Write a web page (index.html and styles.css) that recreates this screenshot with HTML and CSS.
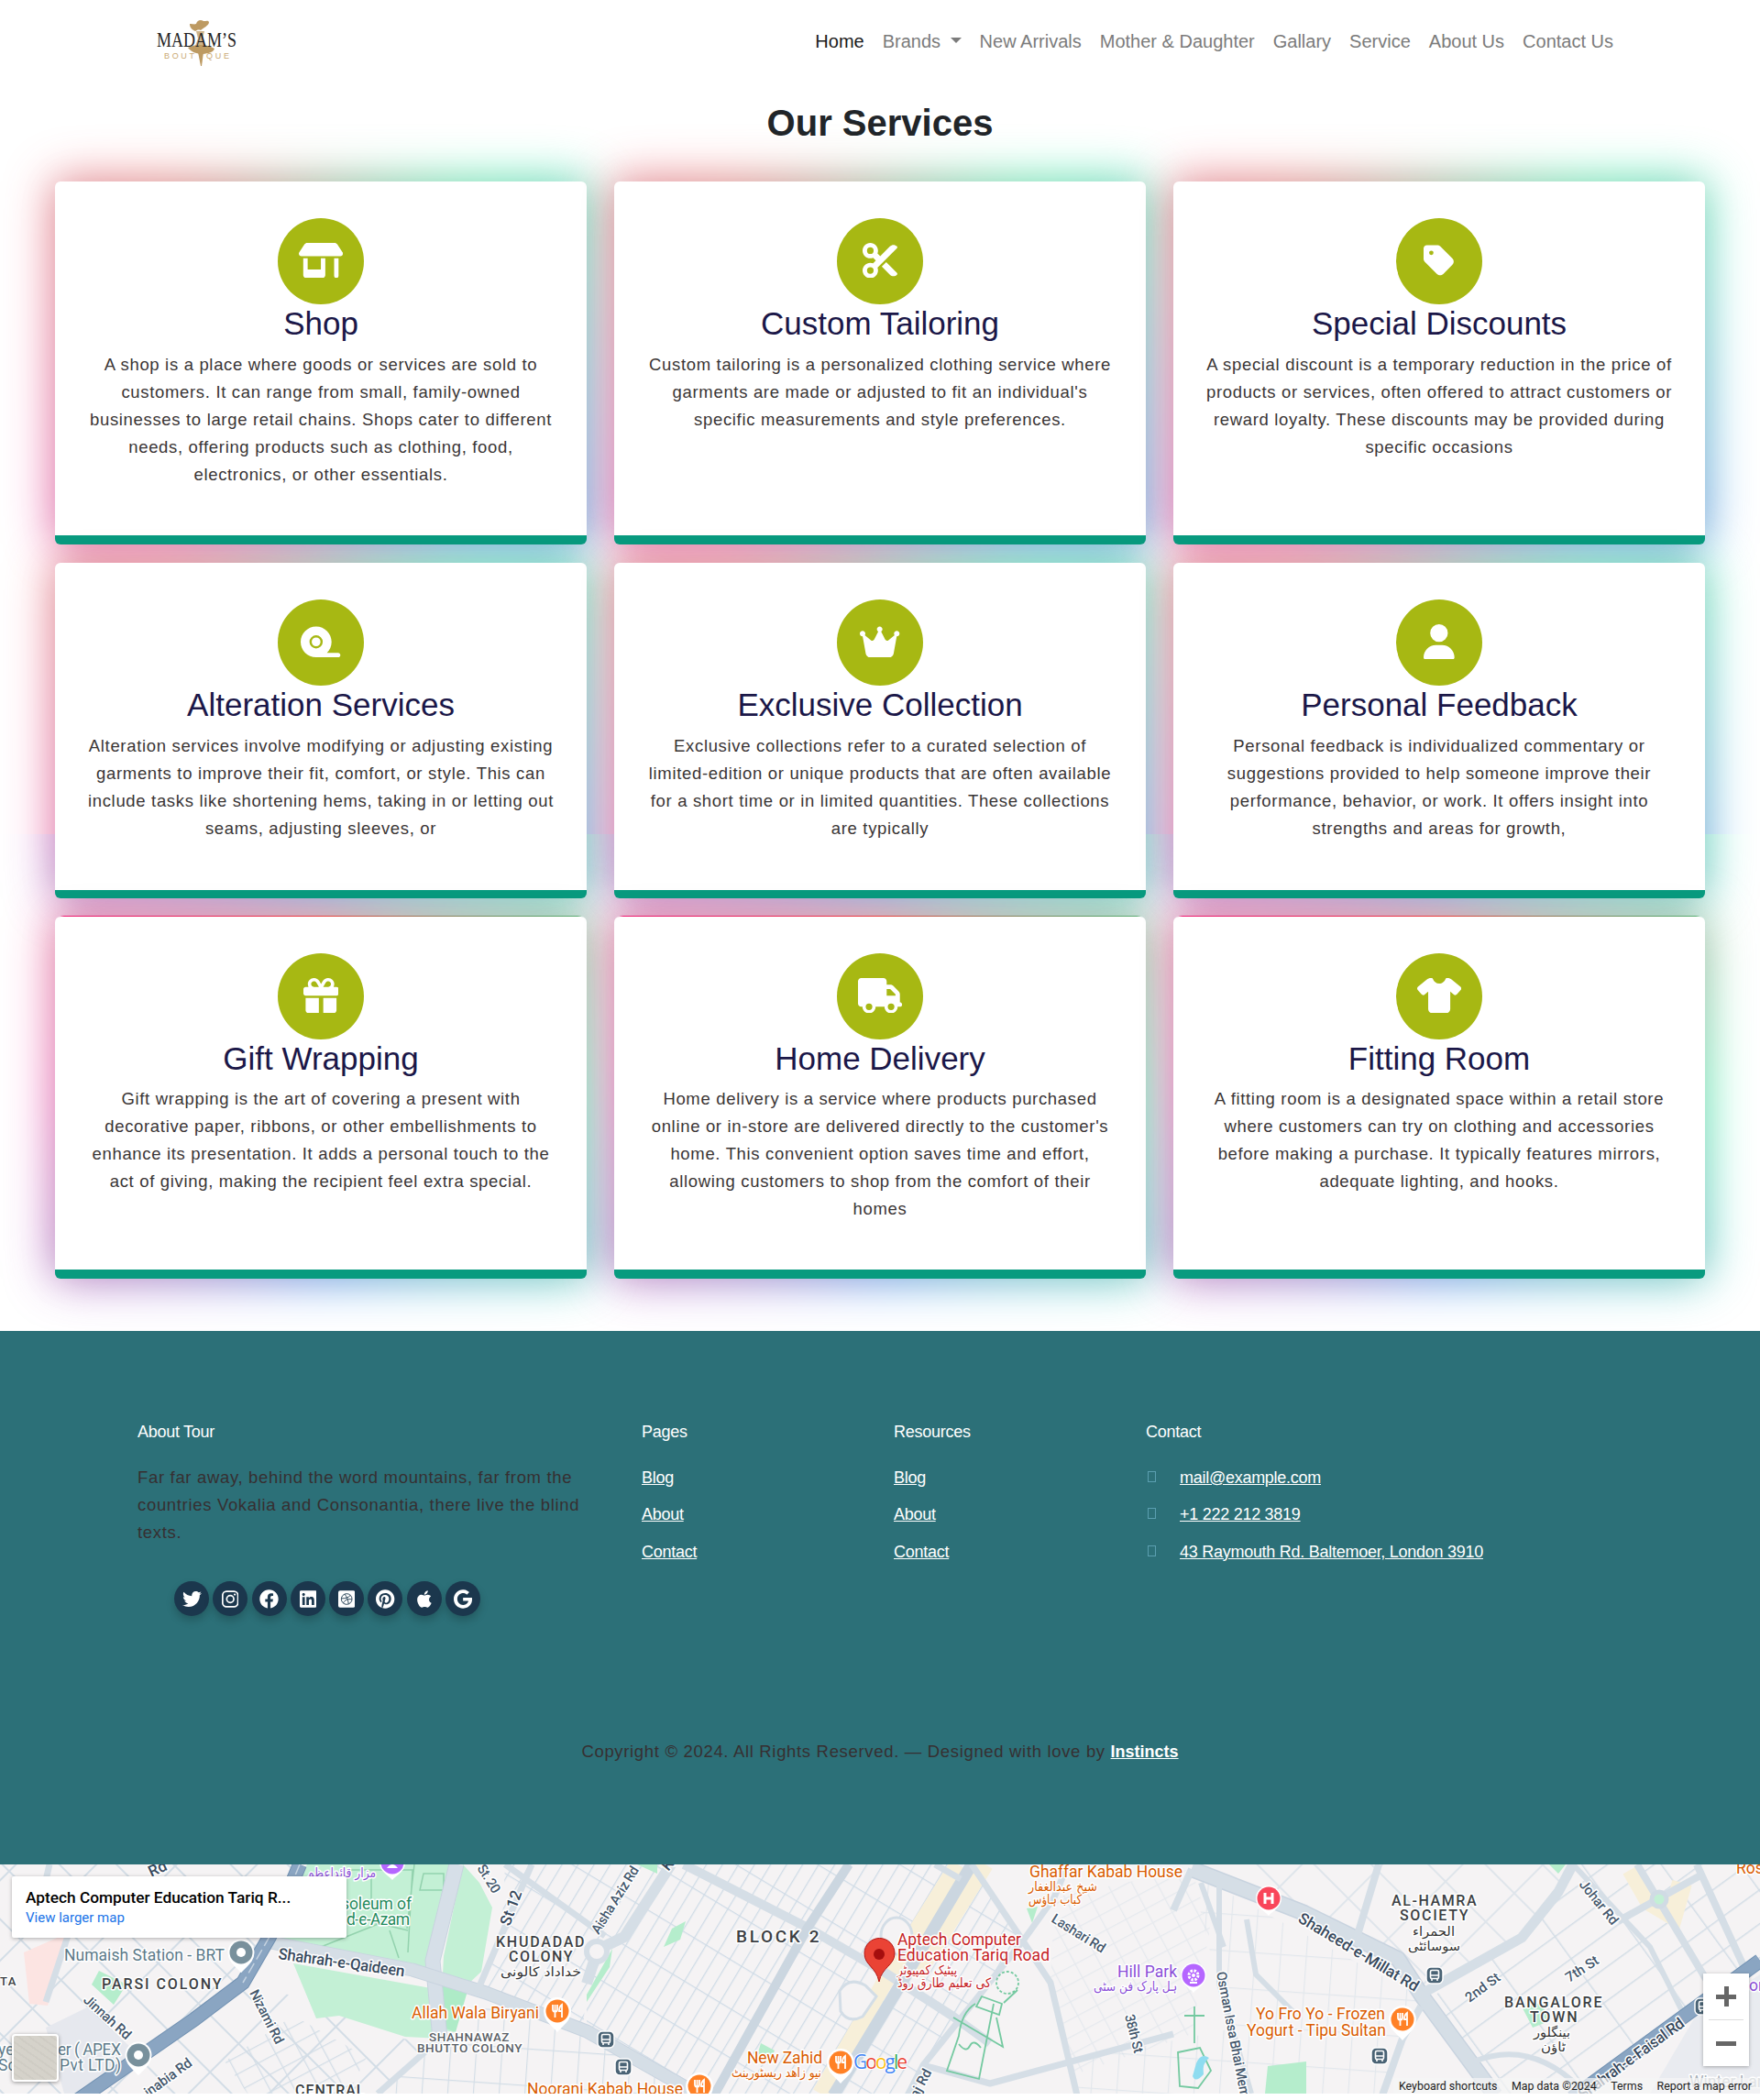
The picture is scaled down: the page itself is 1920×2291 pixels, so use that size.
FILE: index.html
```html
<!DOCTYPE html>
<html lang="en">
<head>
<meta charset="utf-8">
<title>Our Services</title>
<link rel="stylesheet" href="styles.css">
</head>
<body>
<header class="navbar">
  <svg class="logo" viewBox="0 0 100 56" role="img" aria-label="Madam's Boutique">
    <g fill="#bd9a62">
      <path d="M37 9c3 0 5 1 7 0 1-4 5-5 8-3 3 0 5-1 6 1 0 4-6 6-9 9-3-1-4 0-6 1-4-2-6-4-6-8z"/>
      <path d="M44 17h9l-2 8 3 8H43l3-8z" opacity=".75"/>
      <path d="M35 35c7-4 21-4 29 1-2 5-7 5-13 6-6 0-12-2-16-7z"/>
      <path d="M46 40h6l-2 15h-1z"/>
    </g>
    <g class="logo-name">
      <text x="1" y="34" textLength="87" lengthAdjust="spacingAndGlyphs">MADAM’S</text>
    </g>
    <text class="logo-sub" x="9" y="47" textLength="33">BOUT</text>
    <text class="logo-sub" x="55" y="47" textLength="25">QUE</text>
  </svg>
  <nav class="menu">
    <a class="active">Home</a><a>Brands <i class="caret"></i></a><a>New Arrivals</a><a>Mother &amp; Daughter</a><a>Gallary</a><a>Service</a><a>About Us</a><a>Contact Us</a>
  </nav>
</header>
<main class="services">
  <h1>Our Services</h1>
  <div class="grid">
    <article class="card"><span class="icon"><svg viewBox="0 0 640 512"><path d="M36.8 192H603.2c20.3 0 36.8-16.5 36.8-36.8c0-7.3-2.2-14.4-6.2-20.4L558.2 21.4C549.3 8 534.4 0 518.3 0H121.7c-16 0-31 8-39.9 21.4L6.2 134.7c-4 6.1-6.2 13.2-6.2 20.4C0 175.5 16.5 192 36.8 192zM64 224V384v80c0 26.5 21.5 48 48 48H336c26.5 0 48-21.5 48-48V384 224H320V384H128V224H64zm448 0V480c0 17.7 14.3 32 32 32s32-14.3 32-32V224H512z"/></svg></span><h3>Shop</h3><p>A shop is a place where goods or services are sold to customers. It can range from small, family-owned businesses to large retail chains. Shops cater to different needs, offering products such as clothing, food, electronics, or other essentials.</p></article>
    <article class="card"><span class="icon"><svg viewBox="0 0 512 512"><path d="M256 192l-39.5-39.5c4.9-12.6 7.5-26.2 7.5-40.5C224 50.1 173.9 0 112 0S0 50.1 0 112s50.1 112 112 112c14.3 0 27.9-2.7 40.5-7.5L192 256l-39.5 39.5c-12.6-4.9-26.2-7.5-40.5-7.5C50.1 288 0 338.1 0 400s50.1 112 112 112s112-50.1 112-112c0-14.3-2.7-27.9-7.5-40.5L499.2 76.8c7.1-7.1 7.1-18.5 0-25.6c-28.3-28.3-74.1-28.3-102.4 0L256 192zm22.6 150.6L396.8 460.8c28.3 28.3 74.1 28.3 102.4 0c7.1-7.1 7.1-18.5 0-25.6L342.6 278.6l-64 64zM64 112a48 48 0 1 1 96 0 48 48 0 1 1 -96 0zm48 240a48 48 0 1 1 0 96 48 48 0 1 1 0-96z"/></svg></span><h3>Custom Tailoring</h3><p>Custom tailoring is a personalized clothing service where garments are made or adjusted to fit an individual's specific measurements and style preferences.</p></article>
    <article class="card"><span class="icon"><svg viewBox="0 0 448 512"><path d="M0 80V229.5c0 17 6.7 33.3 18.7 45.3l176 176c25 25 65.5 25 90.5 0L418.7 317.3c25-25 25-65.5 0-90.5l-176-176c-12-12-28.3-18.7-45.3-18.7H48C21.5 32 0 53.5 0 80zm112 32a32 32 0 1 1 0 64 32 32 0 1 1 0-64z"/></svg></span><h3>Special Discounts</h3><p>A special discount is a temporary reduction in the price of products or services, often offered to attract customers or reward loyalty. These discounts may be provided during specific occasions</p></article>

    <article class="card split"><span class="icon"><svg viewBox="0 0 576 512"><path d="M380.8 416c41.5-40.7 67.2-97.3 67.2-160C448 132.3 347.7 32 224 32S0 132.3 0 256S100.3 480 224 480H544c17.7 0 32-14.3 32-32s-14.3-32-32-32H380.8zM224 160a96 96 0 1 1 0 192 96 96 0 1 1 0-192zm64 96a64 64 0 1 0 -128 0 64 64 0 1 0 128 0z"/></svg></span><h3>Alteration Services</h3><p>Alteration services involve modifying or adjusting existing garments to improve their fit, comfort, or style. This can include tasks like shortening hems, taking in or letting out seams, adjusting sleeves, or</p></article>
    <article class="card split"><span class="icon"><svg viewBox="0 0 576 512"><path d="M309 106c11.4-7 19-19.7 19-34c0-22.1-17.9-40-40-40s-40 17.9-40 40c0 14.4 7.6 27 19 34L209.7 220.6c-9.1 18.2-32.7 23.4-48.6 10.7L72 160c5-6.7 8-15 8-24c0-22.1-17.9-40-40-40S0 113.9 0 136s17.9 40 40 40c.2 0 .5 0 .7 0L86.4 427.4c5.5 30.4 32 52.6 63 52.6H426.6c30.9 0 57.4-22.1 63-52.6L535.3 176c.2 0 .5 0 .7 0c22.1 0 40-17.9 40-40s-17.9-40-40-40s-40 17.9-40 40c0 9 3 17.3 8 24l-89.1 71.3c-15.9 12.7-39.5 7.5-48.6-10.7L309 106z"/></svg></span><h3>Exclusive Collection</h3><p>Exclusive collections refer to a curated selection of limited-edition or unique products that are often available for a short time or in limited quantities. These collections are typically</p></article>
    <article class="card split"><span class="icon"><svg viewBox="0 0 448 512"><path d="M224 256A128 128 0 1 0 224 0a128 128 0 1 0 0 256zm-45.7 48C79.8 304 0 383.8 0 482.3C0 498.7 13.3 512 29.7 512H418.3c16.4 0 29.7-13.3 29.7-29.7C448 383.8 368.2 304 269.7 304H178.3z"/></svg></span><h3>Personal Feedback</h3><p>Personal feedback is individualized commentary or suggestions provided to help someone improve their performance, behavior, or work. It offers insight into strengths and areas for growth,</p></article>

    <article class="card late"><span class="icon"><svg viewBox="0 0 512 512"><path d="M190.5 68.8L225.3 128H224 152c-22.1 0-40-17.9-40-40s17.9-40 40-40h2.2c14.9 0 28.8 7.9 36.3 20.8zM64 88c0 14.4 3.5 28 9.6 40H32c-17.7 0-32 14.3-32 32v64c0 17.7 14.3 32 32 32H480c17.7 0 32-14.3 32-32V160c0-17.7-14.3-32-32-32H438.4c6.1-12 9.6-25.6 9.6-40c0-48.6-39.4-88-88-88h-2.2c-31.9 0-61.5 16.9-77.7 44.4L256 85.5l-24.1-41C215.7 16.9 186.1 0 154.2 0H152C103.4 0 64 39.4 64 88zm336 0c0 22.1-17.9 40-40 40H288h-1.3l34.8-59.2C329.1 55.9 342.9 48 357.8 48H360c22.1 0 40 17.9 40 40zM32 288V464c0 26.5 21.5 48 48 48H224V288H32zM288 512H432c26.5 0 48-21.5 48-48V288H288V512z"/></svg></span><h3>Gift Wrapping</h3><p>Gift wrapping is the art of covering a present with decorative paper, ribbons, or other embellishments to enhance its presentation. It adds a personal touch to the act of giving, making the recipient feel extra special.</p></article>
    <article class="card late"><span class="icon"><svg viewBox="0 0 640 512"><path d="M48 0C21.5 0 0 21.5 0 48V368c0 26.5 21.5 48 48 48H64c0 53 43 96 96 96s96-43 96-96H384c0 53 43 96 96 96s96-43 96-96h32c17.7 0 32-14.3 32-32s-14.3-32-32-32V288 256 237.3c0-17-6.7-33.3-18.7-45.3L512 114.7c-12-12-28.3-18.7-45.3-18.7H416V48c0-26.5-21.5-48-48-48H48zM416 160h50.7L544 237.3V256H416V160zM112 416a48 48 0 1 1 96 0 48 48 0 1 1 -96 0zm368-48a48 48 0 1 1 0 96 48 48 0 1 1 0-96z"/></svg></span><h3>Home Delivery</h3><p>Home delivery is a service where products purchased online or in-store are delivered directly to the customer's home. This convenient option saves time and effort, allowing customers to shop from the comfort of their homes</p></article>
    <article class="card late"><span class="icon"><svg viewBox="0 0 640 512"><path d="M211.8 0c7.8 0 14.3 5.7 16.7 13.2C240.8 51.9 277.1 80 320 80s79.2-28.1 91.5-66.8C413.9 5.7 420.4 0 428.2 0h12.6c22.5 0 44.2 7.9 61.5 22.3L628.5 127.4c6.6 5.5 10.7 13.5 11.4 22.1s-2.1 17.1-7.8 23.6l-56 64c-11.4 13.1-31.2 14.6-44.6 3.5L480 197.7V448c0 35.3-28.7 64-64 64H224c-35.3 0-64-28.7-64-64V197.7l-51.5 42.9c-13.3 11.1-33.1 9.6-44.6-3.5l-56-64c-5.7-6.5-8.5-15-7.8-23.6s4.8-16.6 11.4-22.1L137.7 22.3C155 7.9 176.7 0 199.2 0h12.6z"/></svg></span><h3>Fitting Room</h3><p>A fitting room is a designated space within a retail store where customers can try on clothing and accessories before making a purchase. It typically features mirrors, adequate lighting, and hooks.</p></article>
  </div>
</main>
<footer class="footer">
  <div class="columns">
    <section>
      <h4>About Tour</h4>
      <p>Far far away, behind the word mountains, far from the countries Vokalia and Consonantia, there live the blind texts.</p>
      <div class="social">
        <a><svg viewBox="0 0 512 512"><path d="M459.37 151.716c.325 4.548.325 9.097.325 13.645 0 138.72-105.583 298.558-298.558 298.558-59.452 0-114.68-17.219-161.137-47.106 8.447.974 16.568 1.299 25.34 1.299 49.055 0 94.213-16.568 130.274-44.832-46.132-.975-84.792-31.188-98.112-72.772 6.498.974 12.995 1.624 19.818 1.624 9.421 0 18.843-1.3 27.614-3.573-48.081-9.747-84.143-51.98-84.143-102.985v-1.299c13.969 7.797 30.214 12.67 47.431 13.319-28.264-18.843-46.781-51.005-46.781-87.391 0-19.492 5.197-37.36 14.294-52.954 51.655 63.675 129.3 105.258 216.365 109.807-1.624-7.797-2.599-15.918-2.599-24.04 0-57.828 46.782-104.934 104.934-104.934 30.213 0 57.502 12.67 76.67 33.137 23.715-4.548 46.456-13.32 66.599-25.34-7.798 24.366-24.366 44.833-46.132 57.827 21.117-2.273 41.584-8.122 60.426-16.243-14.292 20.791-32.161 39.308-52.628 54.253z"/></svg></a>
        <a><svg viewBox="0 0 448 512"><rect x="20" y="52" width="408" height="408" rx="105" fill="none" stroke="#fff" stroke-width="42"/><circle cx="224" cy="256" r="94" fill="none" stroke="#fff" stroke-width="42"/><circle cx="343" cy="137" r="27"/></svg></a>
        <a><svg viewBox="0 0 512 512"><path d="M504 256C504 119 393 8 256 8S8 119 8 256c0 123.78 90.69 226.38 209.25 245V327.69h-63V256h63v-54.64c0-62.15 37-96.48 93.67-96.48 27.14 0 55.52 4.84 55.52 4.84v61h-31.28c-30.8 0-40.41 19.12-40.41 38.73V256h68.78l-11 71.69h-57.78V501C413.31 482.38 504 379.78 504 256z"/></svg></a>
        <a><svg viewBox="0 0 448 512"><path d="M416 32H31.9C14.3 32 0 46.5 0 64.3v383.4C0 465.5 14.3 480 31.9 480H416c17.6 0 32-14.5 32-32.3V64.3c0-17.8-14.4-32.3-32-32.3zM135.4 416H69V202.2h66.5V416zm-33.2-243c-21.3 0-38.5-17.3-38.5-38.5S80.9 96 102.2 96c21.2 0 38.5 17.3 38.5 38.5 0 21.3-17.2 38.5-38.5 38.5zm282.1 243h-66.4V312c0-24.8-.5-56.7-34.5-56.7-34.6 0-39.9 27-39.9 54.9V416h-66.4V202.2h63.7v29.2h.9c8.9-16.8 30.6-34.5 62.9-34.5 67.2 0 79.7 44.3 79.7 101.9V416z"/></svg></a>
        <a><svg viewBox="0 0 448 512"><rect y="32" width="448" height="448" rx="48"/><g fill="none" stroke="#1b374d" stroke-width="22"><circle cx="224" cy="256" r="142"/><path d="M170 126c60 72 92 150 104 260M84 240c100 2 180-16 240-84M132 364c46-88 124-124 232-96"/></g></svg></a>
        <a><svg viewBox="0 0 496 512"><path d="M496 256c0 137-111 248-248 248-25.6 0-50.2-3.9-73.4-11.1 10.1-16.5 25.2-43.5 30.8-65 3-11.6 15.4-59 15.4-59 8.1 15.4 31.7 28.5 56.8 28.5 74.8 0 128.7-68.8 128.7-154.3 0-81.9-66.9-143.2-152.9-143.2-107 0-163.9 71.8-163.9 150.1 0 36.4 19.4 81.7 50.3 96.1 4.7 2.2 7.2 1.2 8.3-3.3.8-3.4 5-20.3 6.9-28.1.6-2.5.3-4.7-1.7-7.1-10.1-12.5-18.3-35.3-18.3-56.6 0-54.7 41.4-107.6 112-107.6 60.9 0 103.6 41.5 103.6 100.9 0 67.1-33.9 113.6-78 113.6-24.3 0-42.6-20.1-36.7-44.8 7-29.5 20.5-61.3 20.5-82.6 0-19-10.2-34.9-31.4-34.9-24.9 0-44.9 25.7-44.9 60.2 0 22 7.4 36.8 7.4 36.8s-24.5 103.8-29 123.2c-5 21.4-3 51.6-.9 71.2C65.4 450.9 0 361.1 0 256 0 119 111 8 248 8s248 111 248 248z"/></svg></a>
        <a><svg viewBox="0 0 384 512"><path d="M318.7 268.7c-.2-36.7 16.4-64.4 50-84.8-18.8-26.9-47.2-41.7-84.7-44.6-35.5-2.8-74.3 20.7-88.5 20.7-15 0-49.4-19.7-76.4-19.7C63.3 141.2 4 184.8 4 273.5q0 39.3 14.4 81.2c12.8 36.7 59 126.7 107.2 125.2 25.2-.6 43-17.9 75.8-17.9 31.8 0 48.3 17.9 76.4 17.9 48.6-.7 90.4-82.5 102.6-119.3-65.2-30.7-61.7-90-61.7-91.9zm-56.6-164.2c27.3-32.4 24.8-61.9 24-72.5-24.1 1.4-52 16.4-67.9 34.9-17.5 19.8-27.8 44.3-25.6 71.9 26.1 2 49.9-11.4 69.5-34.3z"/></svg></a>
        <a><svg viewBox="0 0 488 512"><path d="M488 261.8C488 403.3 391.1 504 248 504 110.8 504 0 393.2 0 256S110.8 8 248 8c66.8 0 123 24.5 166.3 64.9l-67.5 64.9C258.5 52.6 94.3 116.6 94.3 256c0 86.5 69.1 156.6 153.7 156.6 98.2 0 135-70.4 140.8-106.9H248v-85.3h236.1c2.3 12.7 3.9 24.9 3.9 41.4z"/></svg></a>
      </div>
    </section>
    <section><h4>Pages</h4><ul><li><a>Blog</a></li><li><a>About</a></li><li><a>Contact</a></li></ul></section>
    <section><h4>Resources</h4><ul><li><a>Blog</a></li><li><a>About</a></li><li><a>Contact</a></li></ul></section>
    <section><h4>Contact</h4><ul class="contact"><li><i></i><a>mail@example.com</a></li><li><i></i><a>+1 222 212 3819</a></li><li><i></i><a>43 Raymouth Rd. Baltemoer, London 3910</a></li></ul></section>
  </div>
  <p class="copyright">Copyright © 2024. All Rights Reserved. — Designed with love by <a>Instincts</a></p>
</footer>
<div class="map">
  <svg class="canvas" viewBox="0 0 1920 250">
    <defs>
      <pattern id="block" width="15" height="46" patternUnits="userSpaceOnUse" patternTransform="rotate(31)"><path d="M0 0V46M0 0H15" stroke="#cfdbe6" stroke-width="2.6" fill="none"/></pattern>
      <pattern id="wide" width="62" height="44" patternUnits="userSpaceOnUse" patternTransform="translate(10 6) rotate(45)"><path d="M0 0V44M0 0H62" stroke="#d3dde6" stroke-width="4" fill="none"/></pattern>
      <pattern id="tight" width="24" height="17" patternUnits="userSpaceOnUse" patternTransform="rotate(-28)"><path d="M0 0V17M0 0H24" stroke="#d3dde6" stroke-width="2.6" fill="none"/></pattern>
      <pattern id="east" width="70" height="30" patternUnits="userSpaceOnUse" patternTransform="translate(1660 30) rotate(-36)"><path d="M0 0V30M0 0H70" stroke="#d3dde6" stroke-width="3" fill="none"/></pattern>
      <pattern id="upright" width="28" height="40" patternUnits="userSpaceOnUse" patternTransform="rotate(4)"><path d="M0 0V40M0 0H28" stroke="#d3dde6" stroke-width="2.4" fill="none"/></pattern>
      <g id="fork"><path d="M0 20C-5 14-13 10-13 0a13 13 0 1 1 26 0C13 10 5 14 0 20z" fill="#fff" stroke="#fff" stroke-width="4"/><circle r="12.5" fill="#ff8126"/><path d="M-5-7v5q0 3 2.500 3t2.500-3v-5M-2.500-7V7M5 7V-7Q2-5 2 0h3" stroke="#fff" stroke-width="1.800" fill="none"/></g>
      <g id="stop"><path d="M0 20C-5 14-13 10-13 0a13 13 0 1 1 26 0C13 10 5 14 0 20z" fill="#fff" stroke="#fff" stroke-width="3"/><circle r="12.500" fill="#78909c"/><circle r="5" fill="#fff"/></g>
      <g id="bus"><rect x="-9" y="-9" width="18" height="18" rx="5" fill="#4a6375" stroke="#fff" stroke-width="1.500"/><rect x="-4.500" y="-5.500" width="9" height="9" rx="1.500" fill="none" stroke="#fff" stroke-width="1.600"/><path d="M-4.500 0H4.500M-3 4v2M3 4v2" stroke="#fff" stroke-width="1.600"/></g>
    </defs>
    <rect width="1920" height="250" fill="#f5f3f4"/>
    <path d="M0 0H330L262 130 90 250H0z" fill="url(#wide)"/>
    <path d="M26 96l50-22-24 80-20-2z" fill="#fce4e2"/>
    <path d="M50 178l45-22 60 55-70 39H70z" fill="#e6e8ee"/>
    <path d="M215 170L275 130 340 150 440 190 470 195 412 250H110z" fill="url(#wide)"/>
    <path d="M245 215L320 165 400 210 380 250H270z" fill="url(#tight)"/>
    <path d="M470 195l60-40 110 30 110 65H412z" fill="url(#upright)"/>
    <path d="M551 0H735L640 130 636 180 520 140 548 60z" fill="url(#block)"/>
    <path d="M746 0H1050L909 250H760L640 183V130L730 0z" fill="url(#block)"/>
    <path d="M1060 0L1115 82 1007 219 985 250H915z" fill="url(#block)"/>
    <path d="M1150 36L1300 5 1320 70 1300 185 1170 230 1146 129z" fill="url(#tight)" opacity=".45"/>
    <path d="M1300 10L1553 146 1508 250H1175L1165 215 1340 180z" fill="url(#upright)" opacity=".55"/>
    <path d="M1340 0H1716L1660 80 1553 140 1423 53z" fill="url(#wide)" opacity=".65"/>
    <path d="M1560 146L1660 80 1716 0H1920V105L1715 250H1631z" fill="url(#east)"/>
    <path d="M1850 165L1920 120V250H1800z" fill="#e9ebf0"/>
    <path d="M335 0H490L472 115 300 90 292 76zM320 108l150 27 12 55-40-2-72-23-25 3zM505 0l18 20 14 27-12 70-17 16-13 50-15-3 4-80z" fill="#c3f0d5"/>
    <path d="M480 130l30 8-13 45-15-6z" fill="#aeebc7"/>
    <path d="M108 116l30 15-14 22-24-22zM733 70l15-8-6 20-18 8zM695 0h22v10zM640 142l28-50-3 20-25 38zM830 195l15 8-6 14-14-5zM1383 220l42-5v35h-45zM1660 155l22-4 8 20-18 7zM1120 48l12-2-6 18zM1690 0h18l-8 10z" fill="#b5edcc"/>
    <g fill="none" stroke="#93d2ae" stroke-width="1.500"><path d="M380 6h70l-5 90M395 60l50 12M452 0l-8 70M462 10h22v18h-26zM330 95l90 8M350 90l70-28M425 72l10 30M405 10v40"/></g>
    <g fill="none" stroke="#f7efd9"><path d="M1045 0L970 120 895 250M1075 0L1000 120" stroke-width="18"/><path d="M1780 5L1800 40 1825 55 1835 20" stroke-width="22"/></g>
    <g fill="none" stroke="#d5dee6" stroke-linejoin="round">
      <path d="M498 0L472 105 480 190" stroke="#c8d3df" stroke-width="17"/><path d="M498 0L472 105 480 190" stroke="#d6dfe8" stroke-width="15"/>
      <path d="M290 84L450 115 530 140 640 182 760 250" stroke="#c8d3df" stroke-width="15"/><path d="M290 84L450 115 530 140 640 182 760 250" stroke-width="13"/>
      <path d="M551 0L660 78M54 0L40 60M75 75L50 150M480 190L412 250M580 0L520 140" stroke-width="7"/>
      <path d="M732 0L681 79 652 93 640 130" stroke-width="12"/><circle cx="651" cy="95" r="11" stroke-width="6" fill="#f5f3f4"/>
      <path d="M746 0L881 69 967 119 1040 166 1080 195" stroke-width="10"/>
      <path d="M926 0L881 69 779 252" stroke="#cbd6e0" stroke-width="10"/>
      <path d="M1060 0L975 143 909 252" stroke="#cbd6e0" stroke-width="13"/>
      <path d="M1060 0L1115 82 1146 129 1175 252M1165 0L1150 36 1117 82 1007 219 990 252M1007 219L1080 239 1280 185M1020 0L1048 16" stroke-width="7"/>
      <path d="M1300 5L1423 53 1525 103 1553 146 1631 252" stroke="#c8d3df" stroke-width="18"/><path d="M1300 5L1423 53 1525 103 1553 146 1631 252" stroke-width="15"/>
      <path d="M1553 140L1660 80 1700 30 1716 0" stroke-width="11"/><path d="M1508 252L1530 190 1550 155M1300 5L1280 50M1504 0L1480 80M1786 0L1864 130M1851 0L1904 115M1765 62L1855 12" stroke-width="8"/>
      <path d="M1716 0L1800 90 1835 160M1608 215Q1670 190 1725 245M1310 20L1335 90M1330 20V130L1365 250M1360 60L1370 120 1410 160" stroke-width="6"/>
    </g>
    <g fill="none"><path d="M327 0L294 79 265 129 212 169 85 257M1920 105L1715 255" stroke="#7191b2" stroke-width="16"/><path d="M327 0L294 79 265 129 212 169 85 257M1920 105L1715 255" stroke="#8aa5c2" stroke-width="14"/><path d="M327 0L294 79 265 129" stroke="#c5d3e1" stroke-width="1.500" stroke-dasharray="12 5"/></g>
    <circle cx="1810" cy="38" r="8" fill="#c3f0d5" stroke="#d0dbe4" stroke-width="5"/>
    <g fill="#f5f3f4" stroke="#d3dde6" stroke-width="3"><ellipse cx="978" cy="78" rx="17" ry="20"/><path d="M916 138q10-16 28-6l12 12-15 22q-16 8-24-6z"/></g>
    <g fill="none" stroke="#74c9a0" stroke-width="1.800"><circle cx="1099" cy="129" r="12" stroke-dasharray="3 2"/><path d="M1071 144l22 8-3 12-25-9zM1064 152q-15 9-18 35l-13 38 35 9 16-82M1040 167l54 32-7-32M1046 196q8 10 12 2t12 2M1110 137l-15 14M1292 165h22M1303 155v40M1285 205l24-5 12 25-14 19-20-2z"/></g>
    <path d="M1305 217q5-12 14-6-8 6-6 18-9 10-12 2z" fill="#8fdcf0"/>

    <g class="lbl">
      <g fill="#5c7a89"><text x="70" y="105" textLength="175">Numaish Station - BRT</text><text x="-2" y="208">ye</text><text x="63" y="208" textLength="69">er ( APEX</text><text x="-2" y="225">Sc</text><text x="65" y="225" textLength="67">Pvt LTD)</text></g>
      <g fill="#1f8a5b"><text x="372" y="49" textLength="77">soleum of</text><text x="378" y="66" textLength="69">d-e-Azam</text></g>
      <g fill="#d95c00"><text x="449" y="168" textLength="139">Allah Wala Biryani</text><text x="575" y="251" textLength="170">Noorani Kabab House</text><text x="815" y="217" textLength="82">New Zahid</text><text x="1123" y="14" textLength="167">Ghaffar Kabab House</text><text x="1370" y="169" textLength="141">Yo Fro Yo - Frozen</text><text x="1360" y="187" textLength="152">Yogurt - Tipu Sultan</text><text x="1894" y="10">Ros</text></g>
      <g fill="#c5221f"><text x="979" y="88" textLength="135">Aptech Computer</text><text x="979" y="105" textLength="166">Education Tariq Road</text></g>
      <g fill="#8a4fd8"><text x="1219" y="123" textLength="65">Hill Park</text><text x="1908" y="138">or</text></g>
      <text x="1843" y="243" fill="#aab3bb">Winter Lan</text>
      <g class="area"><text x="111" y="136" textLength="132">PARSI COLONY</text><text class="district" x="0" y="132">TA</text><text x="541" y="90" textLength="98">KHUDADAD</text><text x="555" y="106" textLength="71">COLONY</text><text x="322" y="252" textLength="77">CENTRAL</text><text class="quarter" x="803" y="85" textLength="92">BLOCK 2</text><text x="1518" y="45" textLength="94">AL-HAMRA</text><text x="1527" y="61" textLength="76">SOCIETY</text><text x="1641" y="156" textLength="108">BANGALORE</text><text x="1669" y="172" textLength="53">TOWN</text></g>
      <g class="area small"><text x="468" y="193" textLength="89">SHAHNAWAZ</text><text x="455" y="205" textLength="116">BHUTTO COLONY</text></g>
      <g class="road"><text transform="translate(90 149) rotate(42)" textLength="64">Jinnah Rd</text><text transform="translate(272 140) rotate(63)" textLength="64">Nizami Rd</text><text class="big" transform="translate(303 103) rotate(8)" textLength="139">Shahrah-e-Qaideen</text><text class="big" transform="translate(165 14) rotate(-25)">Rd</text><text transform="translate(520 4) rotate(58)" textLength="34">St. 20</text><text class="big" transform="translate(556 68) rotate(-70)">St 12</text><text transform="translate(162 254) rotate(-36)" textLength="60">inabia Rd</text><text transform="translate(653 77) rotate(-58)" textLength="84">Aisha Aziz Rd</text><text class="big" transform="translate(729 8) rotate(-50)">K</text><text transform="translate(1146 62) rotate(32)" textLength="66">Lashari Rd</text><text transform="translate(1227 165) rotate(76)" textLength="43">38th St</text><text transform="translate(1001 256) rotate(-62)">aj Rd</text><text class="big" transform="translate(1415 62) rotate(31)" textLength="150">Shaheed-e-Millat Rd</text><text transform="translate(1327 118) rotate(79)" textLength="140">Osman Issa Bhai Mem</text><text transform="translate(1603 151) rotate(-36)">2nd St</text><text transform="translate(1712 129) rotate(-33)">7th St</text><text class="big" transform="translate(1727 257) rotate(-36)" textLength="138">Shahrah-e-Faisal Rd</text><text transform="translate(1722 22) rotate(51)" textLength="58">Johar Rd</text></g>
      <g class="ur"><g fill="#8a4fd8"><text x="335" y="14" textLength="75" lengthAdjust="spacingAndGlyphs">مزار قائداعظم</text><text x="1193" y="138" textLength="91" lengthAdjust="spacingAndGlyphs">ہل پارک فن سٹی</text></g><g fill="#333"><text x="546" y="122" textLength="88" lengthAdjust="spacingAndGlyphs">خداداد کالونی</text><text x="1541" y="78" textLength="46" lengthAdjust="spacingAndGlyphs">الحمراء</text><text x="1536" y="94" textLength="57" lengthAdjust="spacingAndGlyphs">سوسائٹی</text><text x="1673" y="188" textLength="40" lengthAdjust="spacingAndGlyphs">بینگلور</text><text x="1681" y="204" textLength="27" lengthAdjust="spacingAndGlyphs">ٹاؤن</text></g><g fill="#d95c00"><text x="798" y="232" textLength="98" lengthAdjust="spacingAndGlyphs">نیو زاھد ریسٹورینٹ</text><text x="1122" y="29" textLength="75" lengthAdjust="spacingAndGlyphs">شیخ عبدالغفار</text><text x="1122" y="43" textLength="58" lengthAdjust="spacingAndGlyphs">کباب ہاؤس</text></g><g fill="#c5221f"><text x="979" y="120" textLength="65" lengthAdjust="spacingAndGlyphs">پیٹیک کمپیوٹر</text><text x="979" y="134" textLength="102" lengthAdjust="spacingAndGlyphs">کی تعلیم طارق روڈ</text></g></g>
    </g>
    <use href="#stop" x="263" y="96"/><use href="#stop" x="151" y="208"/>
    <use href="#fork" x="608" y="160"/><use href="#fork" x="763" y="242"/><use href="#fork" x="917" y="216"/><use href="#fork" x="1530" y="169"/>
    <use href="#bus" x="661" y="191"/><use href="#bus" x="680" y="221"/><use href="#bus" x="1565" y="121"/><use href="#bus" x="1505" y="209"/><use href="#bus" x="1858" y="155"/>
    <g transform="translate(428 -2)"><path d="M0 19C-5 13-14 10-14 0H14C14 10 5 13 0 19z" fill="#fff"/><circle r="12.500" fill="#b566ff"/><path d="M-6 6q6-8 12 0z" fill="#fff"/></g>
    <g transform="translate(1302 121)"><path d="M0 19C-5 13-14 10-14 0a14 14 0 1 1 28 0C14 10 5 13 0 19z" fill="#fff"/><circle r="12.500" fill="#b566ff"/><circle r="5" fill="none" stroke="#fff" stroke-width="3" stroke-dasharray="2.500 1.400"/><circle r="2" fill="#fff"/><path d="M-4 8H4" stroke="#fff" stroke-width="2"/></g>
    <g transform="translate(1384 37)"><path d="M0 19C-5 13-14 10-14 0a14 14 0 1 1 28 0C14 10 5 13 0 19z" fill="#fff"/><circle r="12.500" fill="#f9455a"/><path d="M-4-6V6M4-6V6M-4 0H4" stroke="#fff" stroke-width="3"/></g>
    <path d="M959 128c-3-16-16-18-16-31a16.500 16.500 0 1 1 33 0c0 13-14 15-17 31z" fill="#ea4335" stroke="#b31412"/><circle cx="959" cy="98" r="6" fill="#a50e0e"/>
    <text class="google" x="931" y="223" textLength="59"><tspan fill="#4285f4">G</tspan><tspan fill="#ea4335">o</tspan><tspan fill="#fbbc04">o</tspan><tspan fill="#4285f4">g</tspan><tspan fill="#34a853">l</tspan><tspan fill="#ea4335">e</tspan></text>
  </svg>
  <div class="place"><b>Aptech Computer Education Tariq R...</b><a>View larger map</a></div>
  <div class="thumb"></div>
  <div class="zoom"><i class="plus"></i><hr><i class="minus"></i></div>
  <div class="legal"><span>Keyboard shortcuts</span><span>Map data ©2024</span><span>Terms</span><span>Report a map error</span></div>
</div>
</body>
</html>
```
FILE: styles.css
```css
* { box-sizing: border-box; }
body { margin: 0; background: #fff; font-family: "Liberation Sans", Arial, sans-serif; color: #212529; overflow-x: hidden; }
h1, h3, h4, p, ul { margin: 0; padding: 0; }

.navbar { height: 90px; padding: 0 150px 0 170px; display: flex; align-items: center; justify-content: space-between; }
.logo { width: 100px; height: 56px; overflow: visible; }
.logo-name text { font: 23px "Liberation Serif", serif; fill: #222; }
.logo-sub { font: 9px "Liberation Sans", sans-serif; fill: #c9a872; }
.menu { display: flex; font-size: 20px; color: #7b7b7b; }
.menu a { padding: 0 10px; white-space: nowrap; }
.menu .active { color: #1a1a1a; }
.caret { display: inline-block; margin-left: 5px; vertical-align: 5px; border: 6px solid transparent; border-top-color: currentColor; border-bottom: 0; }

.services { position: relative; z-index: 0; height: 1362px; padding: 20px 60px 0; }
.services h1 { font-size: 40px; line-height: 48px; text-align: center; }
.grid { display: grid; grid-template-columns: repeat(3, 580px); grid-template-rows: 396px 366px 395px; gap: 20px 30px; margin-top: 40px; }
.card { --from: -45deg; position: relative; display: flex; flex-direction: column; align-items: center; padding: 40px 35px 0; background: #fff; border-bottom: 10px solid #089b7f; border-radius: 6px; box-shadow: 0 0 40px rgba(0,0,0,.14); text-align: center; }
.card.split { border-bottom-width: 9px; }
.card::before, .card.split::after {
  content: ""; position: absolute; z-index: -1; inset: -3px -3px -12px;
  border-radius: 10px; filter: blur(27px); opacity: .5;
  background: conic-gradient(from var(--from), #ff4545, #00ff99, #006aff, #ff0095, #ff4545);
}
.card.split::before { clip-path: inset(-90px -90px 73px -90px); }
.card.split::after { --from: 0deg; clip-path: inset(299px -90px -90px -90px); }
.late { --from: 0deg; }
.late::after { content: ""; position: absolute; z-index: -1; inset: -1px 0 9px; border-radius: 10px; background: conic-gradient(#ff4545, #00ff99, #006aff, #ff0095, #ff4545); }
.icon { width: 94px; height: 94px; flex: none; display: flex; align-items: center; justify-content: center; padding-bottom: 2px; border-radius: 50%; background: #a7b813; }
.icon svg { height: 38.5px; fill: #fff; }
.card h3 { font-size: 35px; font-weight: 400; line-height: 42px; color: #1b1748; white-space: nowrap; }
.card p { margin-top: 9px; font-size: 18.5px; line-height: 30px; letter-spacing: .67px; color: #3a3535; }
.card.late p { margin-top: 8px; }

.footer { position: relative; height: 582px; padding: 95px 135px 0 150px; background: #2c7078; }
.columns { display: grid; grid-template-columns: 550px 275px 275px 1fr; height: 350px; }
.footer h4 { font-size: 18px; font-weight: 400; line-height: 30px; letter-spacing: -.27px; color: #fff; }
.footer p { font-size: 18.5px; line-height: 30px; letter-spacing: .67px; color: #362f31; }
.footer .columns p { width: 500px; margin-top: 20px; }
.footer ul { list-style: none; margin-top: 20px; }
.footer li { height: 40.3px; line-height: 30px; font-size: 18px; letter-spacing: -.27px; }
.footer a { color: #fff; text-decoration: underline; }
.contact li { display: flex; }
.contact i { width: 9px; height: 12px; margin: 8px 26px 0 2px; border: 1px solid #5b9fb0; }
.social { display: flex; gap: 4.3px; margin: 38px 0 0 40px; }
.social a { width: 38px; height: 38px; display: flex; align-items: center; justify-content: center; border-radius: 50%; background: #1b374d; box-shadow: 0 5px 10px rgba(0,0,0,.2); }
.social svg { height: 21px; fill: #fff; }
.footer .copyright { margin-top: -1px; padding-right: 15px; text-align: center; }
.footer .copyright a { font-size: 18px; font-weight: 700; letter-spacing: 0; }

.map { position: relative; height: 250px; margin-bottom: 7px; overflow: hidden; font-family: Roboto, sans-serif; }
.canvas { display: block; width: 1920px; height: 250px; }
.lbl text { font-family: Roboto, sans-serif; font-size: 17.5px; paint-order: stroke; stroke: #fff; stroke-width: 3px; stroke-linejoin: round; }
.lbl .area text { font-size: 16px; font-weight: 500; fill: #3c3f43; letter-spacing: 1.5px; }
.lbl .area .district { font-size: 13px; }
.lbl .area .quarter { font-size: 19px; }
.lbl .area.small text { font-size: 13.5px; fill: #5a6066; }
.lbl .road text { font-size: 15px; font-weight: 500; fill: #43566b; }
.lbl .road .big { font-size: 17px; fill: #36485c; }
.lbl .ur text { font-family: "DejaVu Sans", sans-serif; font-size: 14px; }
.google { font: 500 21px "Open Sans", sans-serif; paint-order: stroke; stroke: #fff; stroke-width: 2px; }
.place { position: absolute; left: 13px; top: 13px; width: 365px; height: 67px; padding: 12px 15px; background: #fff; border-radius: 2px; box-shadow: 0 1px 4px rgba(0,0,0,.3); }
.place b { display: block; font-size: 17.3px; line-height: 22px; font-weight: 500; color: #000; white-space: nowrap; }
.place a { display: block; font-size: 15px; line-height: 22px; color: #1a73e8; }
.thumb { position: absolute; left: 13px; top: 185px; width: 51px; height: 52px; border: 2px solid #fff; border-radius: 4px; background: repeating-linear-gradient(35deg, #d5d2ca 0 5px, #cfccc4 5px 7px); box-shadow: 0 1px 4px rgba(0,0,0,.4); }
.zoom { position: absolute; right: 12px; top: 119px; width: 50px; height: 101px; display: flex; flex-direction: column; align-items: center; justify-content: space-between; padding: 14px 6px 14px; background: #fff; box-shadow: 0 1px 4px rgba(0,0,0,.3); }
.zoom hr { width: 100%; margin: 0; border: 0; border-top: 1px solid #ddd; }
.plus, .minus { width: 22px; height: 22px; background: linear-gradient(#666, #666) center / 22px 5px no-repeat; }
.plus { background: linear-gradient(#666, #666) center / 22px 5px no-repeat, linear-gradient(#666, #666) center / 5px 22px no-repeat; }
.legal { position: absolute; right: 0; bottom: 0; height: 17px; padding: 0 9px 0 6px; display: flex; gap: 15.5px; font-size: 12.4px; line-height: 17px; color: #222; background: rgba(245,245,245,.7); white-space: nowrap; }
```
